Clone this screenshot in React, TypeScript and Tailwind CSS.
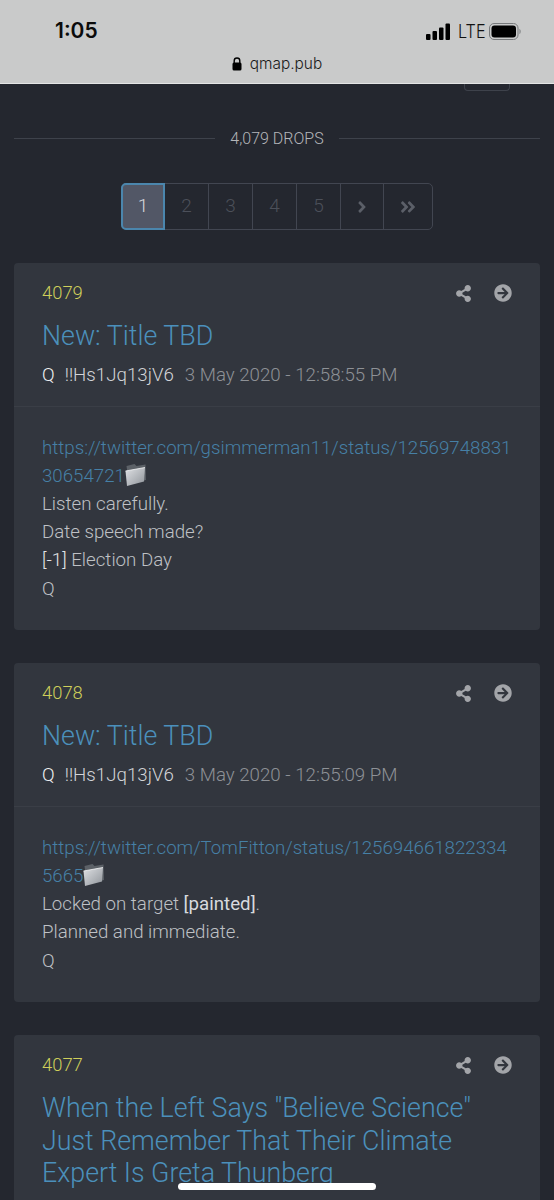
import { FaShareAlt, FaArrowCircleRight, FaAngleRight, FaAngleDoubleRight } from "react-icons/fa"

const roboto = "font-['Roboto',sans-serif] font-light"

function FolderIcon() {
  return (
    <svg width="24" height="24" viewBox="0 0 24 24" className="inline-block align-[-5px] -ml-[2px]">
      <defs>
        <linearGradient id="folderFront" x1="0" y1="0" x2="1" y2="1">
          <stop offset="0" stopColor="#dfe1e4" />
          <stop offset="1" stopColor="#8f949a" />
        </linearGradient>
      </defs>
      <path d="M3.5 3 L11.5 1 L13.5 3 L22.5 1.5 L23 17 L6 21 Z" fill="#5c6167" />
      <path d="M2.5 8 L22 4.5 L21 18.5 L4 23 Z" fill="url(#folderFront)" />
      <path d="M2.5 8 L22 4.5" stroke="#f4f5f6" strokeWidth="0.8" fill="none" />
    </svg>
  )
}

function SignalBars() {
  return (
    <svg width="25" height="17" viewBox="0 0 25 17" fill="#000">
      <rect x="0" y="11" width="4.5" height="6" rx="1" />
      <rect x="6.5" y="8" width="4.5" height="9" rx="1" />
      <rect x="13" y="4.5" width="4.5" height="12.5" rx="1" />
      <rect x="19.5" y="0.5" width="4.5" height="16.5" rx="1" />
    </svg>
  )
}

function Battery() {
  return (
    <svg width="33" height="17" viewBox="0 0 33 17">
      <rect x="0.5" y="0.5" width="28.5" height="16" rx="4.5" fill="none" stroke="#77797b" />
      <rect x="2.5" y="2.5" width="24.5" height="12" rx="3" fill="#000" />
      <path d="M30.5 6 C32 6.5 32 10.5 30.5 11 Z" fill="#77797b" />
    </svg>
  )
}

function LockIcon() {
  return (
    <svg width="10" height="14" viewBox="0 0 10 14">
      <path d="M2.2 6V3.8a2.8 2.8 0 0 1 5.6 0V6" fill="none" stroke="#000" strokeWidth="1.4" />
      <rect x="0.5" y="5.5" width="9" height="8" rx="1.5" fill="#000" />
    </svg>
  )
}

function StatusBar() {
  return (
    <div className="h-[84px] bg-[#c9caca] border-b border-[#e4e5e5] flex flex-col">
      <div className="h-[47px] flex items-end justify-between pl-[55px] pr-[32px]">
        <span className="font-['Inter',sans-serif] font-semibold text-[21px] leading-[28px] text-[#0b0b0b] mb-[2px]">1:05</span>
        <div className="flex items-center mb-[7px]">
          <SignalBars />
          <span className="font-['Inter',sans-serif] text-[18px] leading-[17px] text-[#111] w-[25px] ml-[7px] mr-[6px] scale-x-90 origin-left">LTE</span>
          <Battery />
        </div>
      </div>
      <div className="flex items-center justify-center gap-[8px] mt-[7px]">
        <LockIcon />
        <span className="font-['Inter',sans-serif] text-[15.4px] leading-[20px] text-[#1a1a1a]">qmap.pub</span>
      </div>
    </div>
  )
}

const pages = ["1", "2", "3", "4", "5"]

function Pagination() {
  return (
    <div className="flex justify-center">
      <div className="flex h-[47px] w-[312px] rounded-[5px] border border-[#424651] text-[19px]">
        {pages.map((page, i) => (
          <div
            key={page}
            className={
              i === 0
                ? "w-[44px] -ml-px -my-px rounded-l-[5px] border-2 border-[#4b86ad] bg-[#525766] text-[#d6d8dc] flex items-center justify-center"
                : "w-[44px] border-r border-[#424651] text-[#4c505a] flex items-center justify-center"
            }
          >
            {page}
          </div>
        ))}
        <div className="w-[43px] border-r border-[#424651] text-[#5b5f68] flex items-center justify-center">
          <FaAngleRight size={18} />
        </div>
        <div className="flex-1 text-[#5b5f68] flex items-center justify-center">
          <FaAngleDoubleRight size={18} />
        </div>
      </div>
    </div>
  )
}

type Drop = {
  id: string
  title: string
  date?: string
  link?: [string, string]
  body?: React.ReactNode[]
}

const drops: Drop[] = [
  {
    id: "4079",
    title: "New: Title TBD",
    date: "3 May 2020 - 12:58:55 PM",
    link: ["https://twitter.com/gsimmerman11/status/12569748831", "30654721"],
    body: [
      "Listen carefully.",
      "Date speech made?",
      <>
        <span className="text-[#e2e4e7]">[-1]</span> Election Day
      </>,
      "Q",
    ],
  },
  {
    id: "4078",
    title: "New: Title TBD",
    date: "3 May 2020 - 12:55:09 PM",
    link: ["https://twitter.com/TomFitton/status/125694661822334", "5665"],
    body: [
      <>
        Locked on target <span className="font-normal text-[#d8dade]">[painted]</span>.
      </>,
      "Planned and immediate.",
      "Q",
    ],
  },
  {
    id: "4077",
    title: 'When the Left Says "Believe Science" Just Remember That Their Climate Expert Is Greta Thunberg',
  },
]

function DropCard({ drop }: { drop: Drop }) {
  return (
    <div className="bg-[#32363e] rounded-[4px] mb-[33.5px]">
      <div className="pl-[28px] pr-[28px] pt-[18px] pb-[19px]">
        <div className="flex items-center justify-between h-[24px]">
          <span className="text-[18.4px] leading-[24px] text-[#cfcf5a]">{drop.id}</span>
          <div className="flex items-center gap-[22px] text-[#a3a5a9]">
            <FaShareAlt size={17} />
            <FaArrowCircleRight size={18} />
          </div>
        </div>
        <h2 className="mt-[15px] text-[26.8px] leading-[32.5px] font-light text-[#4b90bb] pr-[20px]">{drop.title}</h2>
        {drop.date && (
          <div className="mt-[10px] text-[18.7px] leading-[24px] flex">
            <span className="text-[#f0f1f2] mr-[10px]">Q</span>
            <span className="text-[#d2d4d8] mr-[11px]">!!Hs1Jq13jV6</span>
            <span className="text-[#8e9196]">{drop.date}</span>
          </div>
        )}
      </div>
      {drop.link && (
        <div className="border-t border-[#3a3e46] pt-[27px] pb-[27px] pl-[28px] pr-[14px] text-[18.7px] leading-[28.2px] text-[#bfc1c5]">
          <div className="text-[#4680a6]">{drop.link[0]}</div>
          <div className="text-[#4680a6]">
            {drop.link[1]}
            <FolderIcon />
          </div>
          {drop.body?.map((line, i) => (
            <div key={i}>{line}</div>
          ))}
        </div>
      )}
    </div>
  )
}

export default function App() {
  return (
    <div className={`relative h-[1200px] w-[554px] overflow-hidden bg-[#24272f] ${roboto}`}>
      <StatusBar />
      <div className="flex justify-end pr-[44px]">
        <div className="h-[7px] w-[46px] rounded-b-[4px] border border-t-0 border-[#3e424b]" />
      </div>
      <div className="px-[14px]">
        <div className="mt-[36px] flex items-center gap-[15px] h-[22px]">
          <div className="flex-1 h-px bg-[#3e424b]" />
          <span className="text-[16px] leading-[22px] text-[#b4b6ba] translate-y-px">4,079 DROPS</span>
          <div className="flex-1 h-px bg-[#3e424b]" />
        </div>
        <div className="mt-[34px]">
          <Pagination />
        </div>
        <div className="mt-[33px]">
          {drops.map((drop) => (
            <DropCard key={drop.id} drop={drop} />
          ))}
        </div>
      </div>
      {/* home indicator */}
      <div className="absolute left-[178px] top-[1183px] h-[7px] w-[198px] rounded-full bg-white" />
    </div>
  )
}
